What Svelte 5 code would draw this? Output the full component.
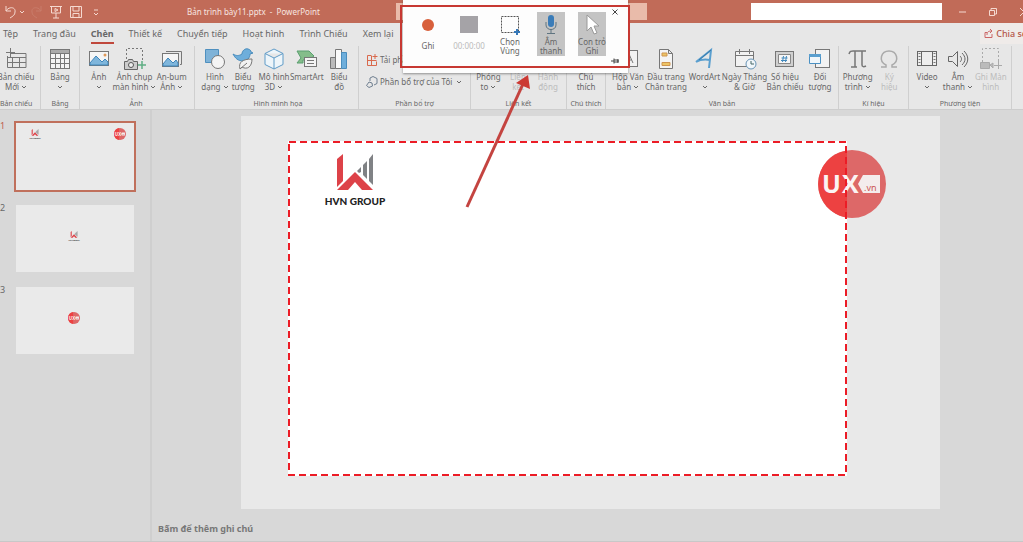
<script>
  const g = 'fill="none" stroke="#777"';
  const icons = {
    slide: `<path ${g} d="M5 5.5h16v14H2.5V8M2.5 9.5H21M7.5 9.5v10M14.5 9.5v10M2.5 14.5H21"/><path stroke="#777" d="M5.5 0v9M1 4.500h9"/>`,
    table: `<rect x="1.500" y="1.500" width="19" height="19" fill="#f4f4f4" stroke="#777"/><path fill="#aaa" d="M2 2h18v3H2z"/><path ${g} d="M1.500 5.500h19M1.500 10.500h19M1.500 15.500h19M6.500 5v15M11.500 5v15M15.500 5v15"/>`,
    image: `<rect x="1.500" y="3.500" width="19" height="14" fill="#f6f6f6" stroke="#777"/><path fill="#7fb6dc" stroke="#3f86bb" d="M2 15l6-7 6 6 3-3 3 3v3H2z"/><circle cx="17" cy="7" r="1.500" fill="#e09a5a"/>`,
    capture: `<path ${g} stroke-dasharray="2 2" d="M2.500 11V.5h16V14"/><path fill="#ccc" stroke="#666" d="M.5 13.500h3l1-2h4l1 2h4v8H.5z"/><circle cx="7" cy="17" r="2.500" fill="#eee" stroke="#555"/><path stroke="#5fae84" stroke-width="1.500" d="M18 13v8M14 17h8"/>`,
    album: `<path ${g} d="M5 3.500h15.500v13H19"/><rect x="1.500" y="5.500" width="16" height="13" fill="#f6f6f6" stroke="#777"/><path fill="#7fb6dc" stroke="#3f86bb" d="M2 16l5-6 5 5 3-3 2 3v3H2z"/>`,
    shapes: `<path fill="#7fb3d8" stroke="#4f90bf" d="M1.500 1.500h13v13h-13z"/><circle cx="14" cy="14" r="6.500" fill="#f4f4f4" stroke="#777"/>`,
    bird: `<path fill="#6eaedb" stroke="#4a8dbd" d="M1 6c3 2 6 2 9 0 0-3 3-6 6-5 2 .5 3 1.500 3 3l2 1-3 1c0 4-3 7-7 7-5 0-8-3-10-7z"/><path fill="#f2f2f2" stroke="#777" d="M8 21c-2-7 3-10 12-10 0 8-5 11-10 8zm0 0l7-6"/>`,
    cube: `<path fill="#edf5fa" stroke="#5f9bc7" d="M11 1l9 4.500v11L11 21l-9-4.500v-11zM2 5.500l9 4.500 9-4.500M11 10v11"/>`,
    smart: `<path fill="#84bd8a" stroke="#5a9f70" d="M1 3h12l5 5-5 4H7v3H1l4-5z"/><rect x="8.500" y="9.500" width="12" height="9" fill="#f4f4f4" stroke="#777"/><path stroke="#777" d="M11 12.500h7M11 15.500h7"/>`,
    chart: `<path fill="#bbb" stroke="#777" d="M2.500 9.500h5v11h-5z"/><path fill="#fafafa" stroke="#777" d="M7.500 1.500h6v19h-6z"/><path fill="#6eaedb" stroke="#4a8dbd" d="M13.500 4.500h5v16h-5z"/>`,
    zoom: `<rect x="2.500" y="2.500" width="17" height="14" fill="#eee" stroke="#777"/>`,
    comment: `<path ${g} d="M2.500 3.500h17v12H10l-4 4v-4H2.500z"/>`,
    textbox: `<rect x="1.500" y="2.500" width="19" height="16" fill="#f2f2f2" stroke="#777"/><path ${g} d="M8 15l4-9 4 9M9.500 12h5"/>`,
    footer: `<path fill="#f4f4f4" stroke="#777" d="M4.500 1.500h9l4 4v15h-13zM13.500 1.500v4h4"/><path fill="#edc565" stroke="#cf9550" d="M7 5h5v3H7zM7 14.500h8v3H7z"/>`,
    wordart: `<path fill="none" stroke="#5a9fcf" stroke-width="2" d="M2 14L17 2l-2 18M2 14c5-3 9-3 14-2"/><path fill="none" stroke="#387aab" d="M5 12L17 2"/>`,
    calendar: `<path fill="#f2f2f2" stroke="#777" d="M1.500 3.500h18v15h-18zM1.500 7.500h18M5.500 1v5M15.500 1v5"/><circle cx="17" cy="16" r="5" fill="#f0f6fa" stroke="#6793b5"/><path fill="none" stroke="#466" d="M17 13v3h3"/>`,
    number: `<rect x="1.500" y="3.500" width="18" height="15" fill="#d0d0d0" stroke="#777"/><path fill="#f6f6f6" stroke="#888" d="M4.500 6.500h12v9h-12z"/><path stroke="#4289bd" d="M9.500 8l-1 6M12.500 8l-1 6M7.500 10h6M7 12.500h6"/>`,
    object: `<rect x="6.500" y="1.500" width="14" height="18" fill="#f2f2f2" stroke="#777"/><path fill="#f0f6fa" stroke="#4a91c4" d="M.5 6.500h11v9H.5z"/><path fill="#5a9fcf" d="M0 6h12v3H0z"/>`,
    pi: `<path fill="none" stroke="#777" stroke-width="1.500" d="M2 6c1-3 2-3 4-3h13M8 3v16H4M15 3v14c0 2 2 2 4 1M5 19h5"/>`,
    omega: `<path fill="none" stroke="#aaa" stroke-width="1.500" d="M3 19h5v-2C0 13 3 3 11 3s11 10 3 14v2h5"/>`,
    video: `<rect x="1.500" y="3.500" width="19" height="14" fill="#eee" stroke="#666"/><path fill="none" stroke="#666" d="M5.500 3v15M16.500 3v15"/><path stroke="#777" stroke-width="2" stroke-dasharray="1 2" d="M3.500 5v12M18.500 5v12"/>`,
    audio: `<path fill="none" stroke="#666" d="M1.500 8.500h4l5-5v15l-5-5h-4zM13 8c2 2 2 4 0 6M15 5c4 4 4 8 0 12M17 3c5 5 5 11 0 16"/>`,
    screen: `<path fill="none" stroke="#aaa" stroke-dasharray="2 2" d="M2.500 14V.5h16V13"/><path fill="#bbb" stroke="#aaa" d="M.5 14.500h9v6h-9zM10 17l3-2v5z"/><path stroke="#aaa" d="M18.500 13v8M14 17.500h8"/>`
  };

  const groups = [
    { name: 'Bản chiếu', cls: 'g1', items: [['slide', 'Bản chiếu', 'Mới', 1]] },
    { name: 'Bảng', cls: 'g2', items: [['table', 'Bảng', '', 1]] },
    { name: 'Ảnh', cls: 'g3', items: [['image', 'Ảnh', '', 1], ['capture', 'Ảnh chụp', 'màn hình', 1], ['album', 'An-bum', 'Ảnh', 1]] },
    { name: 'Hình minh họa', cls: 'g4', items: [['shapes', 'Hình', 'dạng', 1], ['bird', 'Biểu', 'tượng'], ['cube', 'Mô hình', '3D', 1], ['smart', 'SmartArt', ''], ['chart', 'Biểu', 'đồ']] },
    { name: 'Phần bổ trợ', cls: 'g5', items: [] },
    { name: 'Liên kết', cls: 'g6', items: [['zoom', 'Phóng', 'to', 1], ['zoom', 'Liên', 'kết', 0, 1], ['zoom', 'Hành', 'động', 0, 1]] },
    { name: 'Chú thích', cls: 'g7', items: [['comment', 'Chú', 'thích']] },
    { name: 'Văn bản', cls: 'g8', items: [['textbox', 'Hộp Văn', 'bản', 1], ['footer', 'Đầu trang', 'Chân trang'], ['wordart', 'WordArt', '', 1], ['calendar', 'Ngày Tháng', '& Giờ'], ['number', 'Số hiệu', 'Bản chiếu'], ['object', 'Đối', 'tượng']] },
    { name: 'Kí hiệu', cls: 'g9', items: [['pi', 'Phương', 'trình', 1], ['omega', 'Ký', 'hiệu', 0, 1]] },
    { name: 'Phương tiện', cls: 'g10', items: [['video', 'Video', '', 1], ['audio', 'Âm', 'thanh', 1], ['screen', 'Ghi Màn', 'hình', 0, 1]] }
  ];
  const tabs = ['Tệp', 'Trang đầu', 'Chèn', 'Thiết kế', 'Chuyển tiếp', 'Hoạt hình', 'Trình Chiếu', 'Xem lại'];
  let active = $state('Chèn');
  let current = $state(1);
</script>

{#snippet chevron()}
  <svg class="chev" viewBox="0 0 6 4" aria-hidden="true"><path d="M1 1l2 2 2-2" fill="none" stroke="currentColor" /></svg>
{/snippet}

{#snippet hvn()}
  <svg viewBox="0 0 64 56" aria-label="HVN GROUP">
    <path fill="#dd4248" d="M14 6l6-5v27l-6 6z" />
    <path fill="#dd4248" d="M14 37l18-18 18 18H39l-7-8-7 8z" />
    <path fill="#808285" d="M34 18l4-4v5l-2 1zM40 12l4-4v18l-4-4zM46 6l4-5v31l-4-4z" />
    <text x="32" y="52" text-anchor="middle">HVN GROUP</text>
  </svg>
{/snippet}

{#snippet ux()}
  <svg viewBox="0 0 68 68" aria-label="UX.vn">
    <circle cx="34" cy="34" r="34" fill="#dd6868" />
    <path fill="#ed4141" d="M29 .400A34 34 0 0 0 29 67.600z" />
    <text class="mark" x="4" y="43">U</text>
    <text class="mark" x="24" y="43">X</text>
    <path fill="#f4ecec" d="M45 25h17v18H45l-5-9z" />
    <text class="vn" x="46" y="41">.vn</text>
  </svg>
{/snippet}

<div class="app">
  <header>
    <div class="quick">
      <button aria-label="Hoàn tác"><svg viewBox="0 0 22 14"><path d="M3 1v5h5M3 6c3-5 10-4 9 1 0 3-2 4-5 6M17 6l2 2 2-2" /></svg></button>
      <button aria-label="Làm lại" class="faint"><svg viewBox="0 0 22 14"><path d="M15 1v5h-5M15 6c-3-5-10-4-9 1 0 3 2 4 5 6" /></svg></button>
      <button aria-label="Trình chiếu"><svg viewBox="0 0 14 14"><path d="M1 1.500h12M2.500 2v6h9V2M7 8v5M4 13h6M6 3.500v3l3-1.500z" /></svg></button>
      <button aria-label="Lưu"><svg viewBox="0 0 14 14"><path d="M1.500 1.500h11v11h-11zM4 2v4h6V2M4 12V8.500h6V12" /></svg></button>
      <button aria-label="Tùy chỉnh"><svg class="tiny" viewBox="0 0 6 14"><path d="M1 5h4M1 8l2 2 2-2" /></svg></button>
    </div>
    <div class="title">Bản trình bày11.pptx&nbsp; -&nbsp; PowerPoint</div>
    <div class="account"></div>
    <input class="search" aria-label="Tìm kiếm" />
    <div class="win">
      <button aria-label="Thu nhỏ"><svg viewBox="0 0 10 10"><path d="M2 5h7" /></svg></button>
      <button aria-label="Khôi phục"><svg viewBox="0 0 10 10"><path d="M1.500 3.500h5v5h-5zM3 3V1.500h5.500V7H7" /></svg></button>
      <button aria-label="Đóng"><svg viewBox="0 0 10 10"><path d="M1 1l8 8M9 1L1 9" /></svg></button>
    </div>
  </header>

  <nav>
    {#each tabs as t}
      <button class:active={active === t} onclick={() => (active = t)}>{t}</button>
    {/each}
    <button class="share"><svg viewBox="0 0 9 9" aria-hidden="true"><path d="M3 3.500H1v5h7V5M3 6c0-3 1-4 5-4M6 0l2 2-2 2" /></svg>Chia sẻ</button>
  </nav>

  <div class="ribbon">
    {#each groups as group}
      <section class={group.cls}>
        {#if group.items.length}
          <div class="items">
            {#each group.items as [ic, a, b, drop, off]}
              <button class="tool" disabled={!!off}>
                <svg class="ico" viewBox="0 0 22 22" aria-hidden="true">{@html icons[ic]}</svg>
                <span>{a}</span>
                <span>{b}{#if drop}{@render chevron()}{/if}</span>
              </button>
            {/each}
          </div>
        {:else}
          <div class="rows">
            <button><svg viewBox="0 0 12 12" aria-hidden="true"><path fill="none" stroke="#d9694c" d="M5.500 1.500h-4v10h9v-4M1.500 6.500h9M5.500 2v9M9 0v5M6.500 2.500h5" /></svg>Tải phần bổ trợ</button>
            <button><svg viewBox="0 0 12 12" aria-hidden="true"><path fill="none" stroke="#6f7f90" d="M4 5V2l3-1.500 4 2v5L8 9M3 6l3 1 .5 3L3 11.500.5 9.500z" /></svg>Phần bổ trợ của Tôi {@render chevron()}</button>
          </div>
        {/if}
        <h2>{group.name}</h2>
      </section>
    {/each}
  </div>

  <main>
    <aside>
      {#each [1, 2, 3] as n}
        <button class="thumb" class:current={current === n} onclick={() => (current = n)}>
          <span class="num">{n}</span>
          <span class="paper n{n}">
            {#if n !== 3}<span class="mini-hvn">{@render hvn()}</span>{/if}
            {#if n !== 2}<span class="mini-ux">{@render ux()}</span>{/if}
          </span>
        </button>
      {/each}
    </aside>
    <div class="stage">
      <div class="slide">
        <div class="region"></div>
        <div class="logo-hvn">{@render hvn()}</div>
        <div class="logo-ux">{@render ux()}</div>
        <svg class="dash" aria-hidden="true"><rect x="1" y="1" /></svg>
      </div>
      <input class="notes" aria-label="Ghi chú" placeholder="Bấm để thêm ghi chú" />
    </div>
  </main>

  <div class="recorder">
    <div class="frame">
      <button><svg viewBox="0 0 20 20"><circle cx="10" cy="11" r="6" fill="#d8603c" /></svg><span class="low">Ghi</span></button>
      <button class="dim"><svg viewBox="0 0 20 20"><path fill="#a5a3a7" d="M1 2h18v17H1z" /></svg><span class="low">00:00:00</span></button>
      <button><svg viewBox="0 0 20 20"><path fill="none" stroke="#555" stroke-dasharray="2 1" d="M1.500 2.500h17v16h-17z" /><path stroke="#3678b8" stroke-width="2" d="M17 15v6M14 18h6" /></svg><span>Chọn<br />Vùng</span></button>
      <button class="on"><svg viewBox="0 0 20 20"><rect x="7" y="1" width="6" height="12" rx="3" fill="#3a7cb8" /><path fill="none" stroke="#5f7480" d="M5 8v3c0 6 10 6 10 0V8M10 15v4M6 19.500h8" /></svg><span>Âm<br />thanh</span></button>
      <button class="on"><svg viewBox="0 0 20 20"><path fill="#fff" stroke="#999" d="M5 1v16l4-4 3 7 3-1-3-7h5z" /></svg><span>Con trỏ<br />Ghi</span></button>
      <div class="side">
        <button aria-label="Đóng bảng ghi"><svg viewBox="0 0 8 8"><path d="M1.500 1.500l5 5M6.500 1.500l-5 5" /></svg></button>
        <button aria-label="Ghim"><svg viewBox="0 0 8 8"><path d="M0 4h3M3 1.500v5M3 3h4v2H3M7 2v4" /></svg></button>
      </div>
    </div>
  </div>

  <svg class="arrow" viewBox="0 0 80 140" aria-hidden="true">
    <path d="M7 137L63 14" stroke="#c44440" stroke-width="3" />
    <path d="M68 5L56 13l14 6z" fill="#cb3a34" />
  </svg>
</div>

<style>
  :global(body) { margin: 0; }
  .app { position: relative; min-height: 100vh; display: flex; flex-direction: column; overflow: hidden; background: #d8d8d8; color: #686868; font: 9px/10px "Noto Sans", "Open Sans", sans-serif; }
  button { border: 0; padding: 0; margin: 0; background: none; color: inherit; font: inherit; white-space: nowrap; }
  svg { display: block; overflow: visible; }
  header { display: grid; grid-template-columns: 187fr 209fr 251fr 104fr 191fr 81fr; height: 23px; align-items: center; background: #c16b58; color: #f8e6e0; }
  header > * { min-width: 0; }
  header svg { height: 14px; fill: none; stroke: #f5d9d0; }
  .quick { display: flex; gap: 6px; padding-left: 3px; }
  .quick .faint { opacity: .15; margin: 0 -5px; }
  .tiny { width: 6px; margin-left: 4px; }
  .title { font-size: 8px; white-space: nowrap; }
  .account { height: 17px; background: #e9bbaa; }
  .search { grid-column: 5; height: 17px; box-sizing: border-box; border: 0; border-radius: 0; background: #fff; }
  .win { display: flex; gap: 21px; padding-left: 15px; }
  .win svg { width: 10px; height: 10px; }
  nav { display: flex; gap: 15px; height: 23px; padding-left: 3px; background: #e7e7e7; }
  nav button { height: 21px; padding-top: 2px; border-bottom: 2px solid transparent; }
  nav .active { font-weight: 700; border-color: #c0483c; }
  nav .share { margin-left: auto; margin-right: -8px; padding: 2px 4px 0; display: flex; align-items: center; gap: 3px; background: #efebe9; color: #b4574a; font-weight: 500; }
  .share svg { width: 9px; height: 9px; fill: none; stroke: #c66; }
  .ribbon { display: grid; grid-template-columns: 41fr 39fr 115fr 164fr 112fr 96fr 39fr 233fr 70fr 103fr 11fr; height: 63px; background: #e7e7e7; border-bottom: 1px solid #cdcdcd; font-size: 8px; }
  section { display: flex; flex-direction: column; justify-content: space-between; min-width: 0; border-right: 1px solid #cfcfcf; padding: 2px 3px 0; }
  .items { display: grid; grid-template-columns: 1fr; }
  .g1 { padding-left: 0; padding-right: 8px; }
  .g2, .g7 { padding-left: 0; padding-right: 0; }
  .g3 { padding-left: 1px; }
  .g3 .items { grid-template-columns: 36fr 36fr 39fr; }
  .g4 { padding-left: 6px; }
  .g4 .items { grid-template-columns: 28fr 29fr 33fr 33fr 32fr; }
  .g6 .items { grid-template-columns: 28fr 29fr 29fr; }
  .g8 .items { grid-template-columns: 38fr 38fr 39fr 41fr 40fr 30fr; }
  .g9 .items { grid-template-columns: 1fr 1fr; }
  .g10 .items { grid-template-columns: 30fr 31fr 34fr; }
  .tool { display: flex; flex-direction: column; align-items: center; min-width: 0; }
  .tool:disabled { color: #bcbcbc; }
  .tool span { display: flex; align-items: center; gap: 2px; height: 10px; }
  .ico { width: 22px; height: 22px; margin-bottom: 2px; }
  .chev { width: 6px; height: 4px; }
  h2 { margin: 0; font: 7px/11px "Noto Sans", sans-serif; text-align: center; white-space: nowrap; }
  .rows { display: flex; flex-direction: column; gap: 12px; padding: 7px 0 0 4px; }
  .rows button { display: flex; align-items: center; gap: 2px; height: 10px; }
  .rows svg { width: 12px; height: 12px; flex: none; }
  .rows .chev { width: 6px; height: 4px; margin-left: 2px; }
  main { flex: 1; display: grid; grid-template-columns: 152px 1fr; border-bottom: 1px solid #c8c8c8; }
  aside { display: flex; flex-direction: column; gap: 11px; padding-top: 11px; border-right: 2px solid #cfcfcf; }
  .thumb { display: flex; gap: 8px; text-align: left; }
  .num { width: 6px; font-size: 9px; }
  .paper { position: relative; box-sizing: border-box; width: 122px; height: 71px; border: 2px solid transparent; background: #eaeaea; background-clip: padding-box; }
  .current .num { color: #c0604e; }
  .current .paper { border-color: #c0705c; }
  .mini-hvn, .mini-ux { position: absolute; left: 49%; top: 47%; transform: translate(-50%, -50%); width: 12px; }
  .n1 .mini-hvn { left: 16%; top: 17%; }
  .n1 .mini-ux { left: 88%; top: 17%; }
  .stage { display: flex; flex-direction: column; padding: 6px 83px 0 89px; }
  .slide { position: relative; flex: 1; background: #e9e9e9; }
  .region, .dash { position: absolute; left: 47px; right: 93px; top: 25px; bottom: 33px; }
  .region { background: #fff; }
  .dash { width: calc(100% - 140px); height: calc(100% - 58px); }
  .dash rect { width: calc(100% - 2px); height: calc(100% - 2px); fill: none; stroke: #ec1c26; stroke-width: 2; stroke-dasharray: 7 4; }
  .logo-hvn { position: absolute; left: 82px; top: 37px; width: 64px; }
  .logo-ux { position: absolute; right: 54px; top: 34px; width: 68px; }
  text { font: 900 10px Lato, sans-serif; fill: #222; }
  .mark { font: 700 25px "Open Sans", sans-serif; fill: #fbf3f3; }
  .vn { font: 9px "Noto Sans", sans-serif; fill: #c55; }
  .notes { margin: 11px 0 4px -83px; height: 17px; padding: 0; border: 0; background: none; font: 700 9px "Noto Sans", sans-serif; }
  .notes::placeholder { color: #777; opacity: 1; }
  .recorder { position: absolute; left: 403px; top: 0; width: 225px; height: 73px; background: #fdfdfd; box-shadow: 0 1px 2px #4448; color: #666; font-size: 8px; }
  .frame { position: absolute; box-sizing: border-box; left: -3px; top: 5px; width: 230px; height: 63px; border: 2px solid #c73832; display: flex; gap: 13px; padding-left: 12px; }
  .frame > button { display: flex; flex-direction: column; align-items: center; flex: none; width: 28px; height: 44px; margin-top: 5px; line-height: 9px; }
  .frame > button svg { width: 20px; height: 20px; margin-top: 2px; margin-bottom: 3px; flex: none; }
  .frame > .on { background: #c4c4c4; }
  .low { padding-top: 4px; }
  .dim { color: #bbb; }
  .side { display: flex; flex-direction: column; justify-content: space-between; margin-left: -8px; padding: 1px 0; }
  .side svg { width: 8px; height: 8px; fill: none; stroke: #444; }
  .arrow { position: absolute; left: 460px; top: 70px; width: 80px; height: 140px; }
</style>
